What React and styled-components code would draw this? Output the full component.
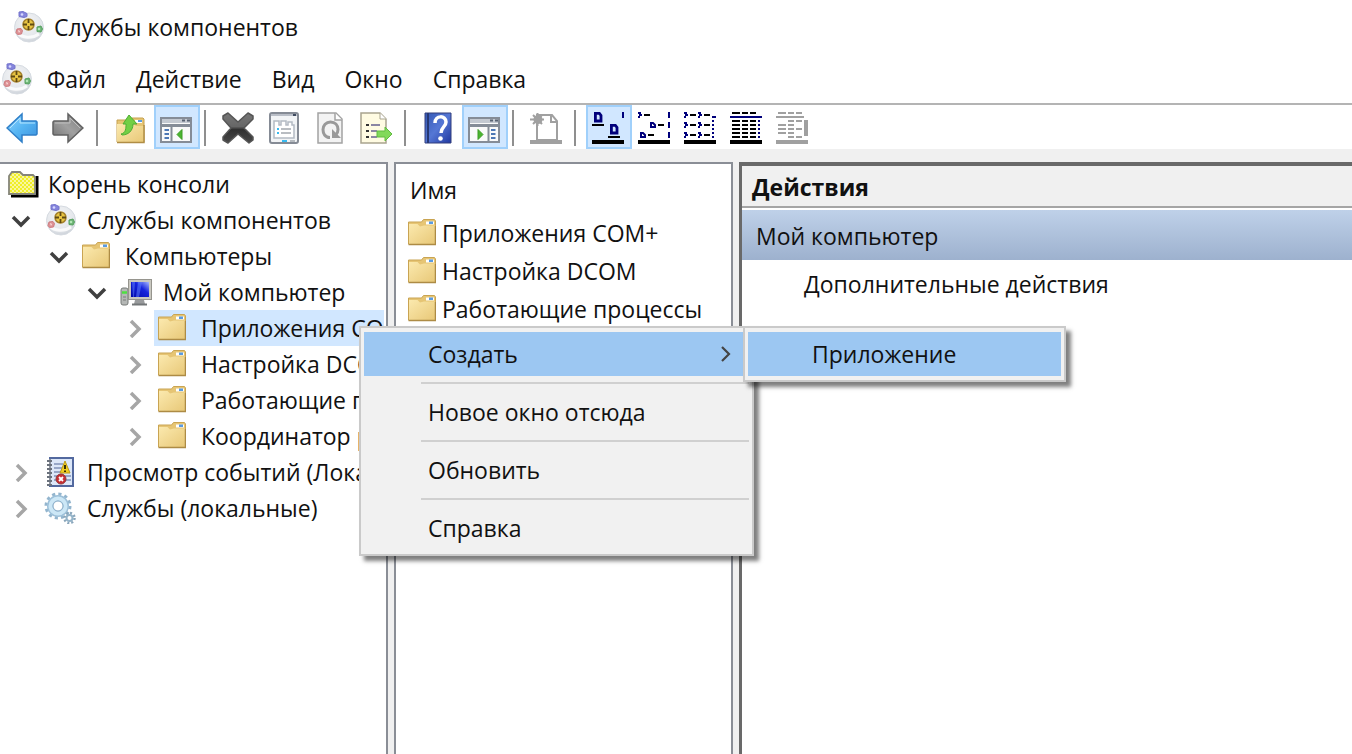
import React, { useState } from "react";
import styled, { createGlobalStyle, css } from "styled-components";

const GlobalStyle = createGlobalStyle`
  * {
    box-sizing: border-box;
  }

  body {
    margin: 0;
    background: #fff;
    color: #111;
    font-family: "Open Sans", "Noto Sans", sans-serif;
    font-size: 23px;
    line-height: 36px;
  }

  button {
    font: inherit;
    color: inherit;
    background: none;
    border: 0;
    padding: 0;
    margin: 0;
    text-align: left;
  }
`;

const Window = styled.div`
  display: flex;
  flex-direction: column;
  min-height: 100vh;
  overflow: hidden;
`;

const TitleBar = styled.header`
  display: flex;
  align-items: center;
  gap: 10px;
  height: 54px;
  padding: 0 12px;
`;

const Title = styled.h1`
  margin: 0;
  font-size: inherit;
  font-weight: 400;
`;

const MenuBar = styled.nav`
  display: flex;
  align-items: center;
  height: 51px;
  border-bottom: 2px solid #b4b4b4;
`;

const MenuBarItem = styled.button`
  padding: 0 15px;
`;

const ToolBar = styled.div`
  display: flex;
  height: 44px;
`;

const ToolButton = styled.button`
  display: flex;
  align-items: center;
  justify-content: center;
  width: 46px;
  flex: none;
  padding: 2px 2px 0 0;
  border: 2px solid transparent;

  ${(props) =>
    props.$pressed &&
    css`
      background: #d1e7ff;
      border-color: #a0d0fb;
    `}
`;

const ToolSeparator = styled.span`
  width: 2px;
  height: 36px;
  margin: 5px 10px 0 4px;
  background: #8f8f8f;
  flex: none;
`;

const Workspace = styled.main`
  position: relative;
  display: flex;
  flex: 1;
  gap: 6px;
  padding-top: 13px;
  background: #f0f0f0;
`;

const paneStyles = css`
  background: #fff;
  border: 2px solid #8a8e96;
  border-bottom: 0;
  overflow: hidden;
`;

const TreePane = styled.section`
  ${paneStyles}
  flex: 0 0 388px;
  border-left: 0;
  padding: 2px 2px 0 0;
`;

const TreeRow = styled.div`
  display: flex;
  align-items: center;
  height: 36px;
  padding-left: ${(props) => props.$level * 38}px;
  white-space: nowrap;
`;

const Expander = styled.button`
  display: flex;
  align-items: center;
  justify-content: center;
  flex: none;
  width: 40px;
  height: 36px;
  padding-left: 2px;
  color: ${(props) => (props.$open ? "#404040" : "#a6a6a6")};
`;

const TreeLabel = styled.button`
  display: flex;
  align-items: center;
  gap: ${(props) => (props.$root ? 9 : 11)}px;
  flex: 1;
  min-width: 0;
  height: 36px;
  overflow: hidden;
  padding-left: ${(props) => (props.$root ? 8 : 4)}px;
  background: ${(props) => (props.$selected ? "#d1e7ff" : "transparent")};

  svg {
    flex: none;
  }
`;

const IconSlot = styled.span`
  display: flex;
  align-items: center;
  flex: none;
  width: 32px;
`;

const ListPane = styled.section`
  ${paneStyles}
  flex: 0 0 339px;
  padding: 2px 0 0 12px;
`;

const List = styled.table`
  border-collapse: collapse;
  white-space: nowrap;

  th {
    height: 48px;
    padding: 0 2px;
    font-weight: 400;
    text-align: left;
  }

  td {
    height: 38px;
    padding: 0;
  }
`;

const ListCell = styled.div`
  display: flex;
  align-items: center;
  gap: 6px;
`;

const ActionsPane = styled.aside`
  flex: 1;
  min-width: 0;
  background: #fff;
  border-top: 4px solid #696969;
  border-left: 3px solid #696969;
`;

const ActionsHeader = styled.h2`
  margin: 0 0 2px;
  height: 42px;
  padding: 3px 10px 0;
  border-bottom: 2px solid #a5a5a5;
  background: #f0f0f0;
  font-size: inherit;
  font-weight: 700;
`;

const ActionsGroup = styled.h3`
  margin: 0;
  height: 50px;
  padding: 8px 14px;
  background: linear-gradient(#bfd1e9, #9db1ce);
  font-size: inherit;
  font-weight: 400;
`;

const ActionLink = styled.button`
  display: block;
  padding: 6px 62px;
  white-space: nowrap;
`;

const popupStyles = css`
  position: absolute;
  display: flex;
  flex-direction: column;
  padding: 4px 3px;
  background: #f1f1f1;
  border: 2px solid #cacaca;
  box-shadow: 5px 5px 4px rgba(0, 0, 0, 0.5);
`;

const ContextMenu = styled.div`
  ${popupStyles}
  left: 359px;
  top: 177px;
  width: 395px;
`;

const SubMenu = styled.div`
  ${popupStyles}
  left: 743px;
  top: 177px;
  width: 323px;
`;

const MenuItem = styled.button`
  display: flex;
  align-items: center;
  justify-content: space-between;
  height: 44px;
  padding: 0 16px 0 64px;
  background: ${(props) => (props.$active ? "#9cc7f2" : "transparent")};
`;

const MenuSeparator = styled.hr`
  width: calc(100% - 57px);
  margin: 6px 0 6px 57px;
  border: 0;
  border-top: 2px solid #d0d0d0;
`;

const Icon = ({ size = 32, box = 32, children, ...rest }) => (
  <svg width={size} height={size} viewBox={`0 0 ${box} ${box}`} fill="none" aria-hidden="true" {...rest}>
    {children}
  </svg>
);

const ComponentsIcon = () => (
  <Icon>
    <defs>
      <radialGradient id="ball" cx=".45" cy=".35" r=".7">
        <stop offset="0" stopColor="#f4f5f7" />
        <stop offset=".7" stopColor="#e4e7eb" />
        <stop offset="1" stopColor="#c6ccd4" />
      </radialGradient>
    </defs>
    <circle cx="17" cy="16.500" r="14.500" fill="url(#ball)" stroke="#d6dbe1" />
    <path d="M6 22c4 5 14 6 21 1" stroke="#fff" strokeWidth="3" opacity=".8" />
    <circle cx="16.500" cy="13.500" r="5.500" fill="#e9c542" stroke="#a5822c" strokeWidth="1.500" />
    <path d="M16.500 8v4M16.500 15v4M11 13.500h4M18 13.500h4" stroke="#5f4a14" strokeWidth="1.800" />
    <path d="M7 1l4-.5 4 2v3l-3 1-5-1z" fill="#8585dc" stroke="#7474cc" />
    <circle cx="10" cy="3.500" r="1.300" fill="#d8d8ff" />
    <path d="M5 18l4-.5 1.500 2-1 3.500-4 .5-1.500-2z" fill="#dd9295" stroke="#cf7c80" />
    <path d="M6 19l2 1-1 2z" fill="#ffe4e4" />
    <path d="M25 16l4-1 1.500 3-1.500 3-4-.5z" fill="#6cb475" stroke="#56a15f" />
    <circle cx="27" cy="18" r="1.300" fill="#b4e6b7" />
  </Icon>
);

const FolderFill = () => (
  <defs>
    <linearGradient id="folder" x1="0" y1="0" x2="1" y2="1">
      <stop offset="0" stopColor="#fbe9ae" />
      <stop offset="1" stopColor="#e8c878" />
    </linearGradient>
  </defs>
);

const FolderIcon = () => (
  <svg width="28" height="28" viewBox="0 0 28 28" fill="none" aria-hidden="true">
    <FolderFill />
    <path d="M.5 3h13l2-2.500h11l1 1.500V25H.5z" fill="#e6c574" stroke="#c9a452" />
    <path d="M18 2.500h8v3h-8z" fill="#fff" />
    <path d="M21 2.500h4v2.500h-4z" fill="#5a9be0" />
    <path d="M1 5h8.500l2.500 2.500 4-1H27V25H1z" fill="url(#folder)" />
    <path d="M.5 25.500h27V7" stroke="#ad8b45" strokeWidth="1.500" />
  </svg>
);

const RootIcon = () => (
  <svg width="31" height="28" viewBox="0 0 31 28" fill="none" aria-hidden="true">
    <defs>
      <pattern id="dots" width="4" height="4" patternUnits="userSpaceOnUse">
        <path d="M0 0h4v4H0z" fill="#f0ee28" />
        <path d="M0 0h2v2H0zM2 2h2v2H2z" fill="#f8f6a0" />
      </pattern>
    </defs>
    <path d="M3 26h26V6" stroke="#000" strokeWidth="3" />
    <path d="M1 24V6l3-4h8l3 3h10l2 2v17z" fill="url(#dots)" stroke="#85857a" strokeWidth="1.800" />
  </svg>
);

const ComputerIcon = () => (
  <Icon>
    <defs>
      <linearGradient id="screen" x1="0" y1="1" x2="1" y2="0">
        <stop offset="0" stopColor="#0008a8" />
        <stop offset=".6" stopColor="#1624dd" />
        <stop offset="1" stopColor="#a6b8ff" />
      </linearGradient>
    </defs>
    <rect x="1" y="12" width="7" height="17" rx="2" fill="#b5b8b6" stroke="#777b78" />
    <path d="M2 16.500h5" stroke="#4de03f" strokeWidth="2.500" />
    <path d="M3 21h3M3 24h3" stroke="#7b7b7b" />
    <path d="M15 24h9l1 4H14z" fill="#999b9d" />
    <path d="M12 28.500h15" stroke="#737678" strokeWidth="2" />
    <rect x="8.500" y="3.500" width="23" height="20" fill="#c9c8c0" stroke="#96958e" />
    <rect x="11" y="6" width="18" height="15" fill="url(#screen)" />
    <path d="M18 6h4l-3 15h-3zM12 6h3l-1 15h-1z" fill="#6585ff" opacity=".5" />
  </Icon>
);

const EventsIcon = () => (
  <Icon>
    <rect x="6" y="2" width="23" height="28" fill="#dce7f8" stroke="#53699f" strokeWidth="2" />
    <path d="M10 8h9M10 12h8M10 16h7M10 20h17M10 24h17" stroke="#8092b8" strokeWidth="1.500" />
    <path d="M6 3v26" stroke="#8e949f" strokeWidth="2" />
    <path d="M3 5h5M3 9h5M3 13h5M3 17h5M3 21h5M3 25h5M3 29h5" stroke="#6a717c" strokeWidth="1.800" />
    <path d="M21 5l5 12H16z" fill="#f2ce22" stroke="#bb9a18" />
    <path d="M21 9v4M21 14.500v1.500" stroke="#383000" strokeWidth="2" />
    <circle cx="17" cy="23" r="5" fill="#c72e32" stroke="#94383b" />
    <path d="M15 21l4 4M19 21l-4 4" stroke="#fff" strokeWidth="1.800" />
  </Icon>
);

const ServicesIcon = () => (
  <Icon>
    <circle cx="14" cy="14" r="12" stroke="#93b5ce" strokeWidth="3" strokeDasharray="3.140 3.140" />
    <circle cx="14" cy="14" r="8" stroke="#9dc0d9" strokeWidth="6" />
    <circle cx="14" cy="14" r="7.500" stroke="#cce7f6" strokeWidth="4" />
    <circle cx="14" cy="14" r="5" fill="#fff" stroke="#83a9c6" />
    <circle cx="25.500" cy="26" r="5" stroke="#8aa6bb" strokeWidth="2.500" strokeDasharray="1.960 1.960" />
    <circle cx="25.500" cy="26" r="3" fill="#fff" stroke="#95b4c9" strokeWidth="2" />
  </Icon>
);

const ArrowIcon = ({ forward }) => (
  <Icon>
    <defs>
      <linearGradient id={forward ? "fwd" : "back"} x1="0" y1="0" x2="1" y2="1">
        <stop offset="0" stopColor={forward ? "#7d7d7d" : "#8fd4ff"} />
        <stop offset=".5" stopColor={forward ? "#a0a0a0" : "#55b4f2"} />
        <stop offset="1" stopColor={forward ? "#6e6e6e" : "#3c90dc"} />
      </linearGradient>
    </defs>
    <path
      d="M1 16L16 2v7h14l1 1v12l-1 1H16v7z"
      transform={forward ? "matrix(-1 0 0 1 32 0)" : undefined}
      fill={`url(#${forward ? "fwd" : "back"})`}
      stroke={forward ? "#616161" : "#2f7fc8"}
      strokeWidth="1.500"
    />
    <path
      d="M4 16L14 6v5h15"
      transform={forward ? "matrix(-1 0 0 1 32 0)" : undefined}
      stroke={forward ? "#c0c0c0" : "#b5e5ff"}
    />
  </Icon>
);

const FolderUpIcon = () => (
  <Icon>
    <path d="M3 8h13l2-2h11l1 1v23H3z" fill="#e6c574" stroke="#c6a14f" />
    <path d="M21 8h7v3h-7z" fill="#fff" />
    <path d="M24 8h4v2h-4z" fill="#5a9be0" />
    <path d="M3 12h16l3 2h8v16H3z" fill="url(#folder)" />
    <path d="M3 30.500h27V13" stroke="#b08d45" strokeWidth="1.500" />
    <path d="M7 22c5-1 5-6 5-10H9l6-9 8 9h-4c0 7-5 11-11 11z" fill="#72cf45" stroke="#4fae34" />
  </Icon>
);

const PaneIcon = ({ flip }) => (
  <Icon>
    <path d="M1 6h30v24H1z" fill="#fafafa" stroke="#858c97" strokeWidth="2" />
    <path d="M2 7h28v4H2z" fill="#c4c9d1" />
    <path d="M22 8.500h3M27 8.500h3" stroke="#596372" strokeWidth="2" />
    <path d="M2 13.500h28" stroke="#858c97" strokeWidth="3" />
    <g transform={flip ? "matrix(-1 0 0 1 32 0)" : undefined}>
      <path d="M11.500 15v14" stroke="#858c97" strokeWidth="2" />
      <path d="M4.500 18H9M4.500 22H9M4.500 26H9" stroke="#4e78b5" strokeWidth="2" />
      <path d="M17 22.500l5-5v10z" fill="#4bb52f" stroke="#3c9b24" />
    </g>
  </Icon>
);

const DeleteIcon = () => (
  <Icon>
    <defs>
      <linearGradient id="cross" x1="0" y1="0" x2="0" y2="1">
        <stop offset="0" stopColor="#777" />
        <stop offset=".45" stopColor="#666" />
        <stop offset=".55" stopColor="#303030" />
        <stop offset="1" stopColor="#484848" />
      </linearGradient>
    </defs>
    <path
      d="M1 4l5-3 10 9 10-9 5 3v3l-9 9 9 9v3l-4 3-11-9-10 9-5-3v-3l8-9-8-9z"
      fill="url(#cross)"
      stroke="#555"
      strokeWidth="1.500"
      strokeLinejoin="round"
    />
  </Icon>
);

const PropertiesIcon = () => (
  <Icon>
    <rect x="2" y="1" width="28" height="30" rx="2" fill="#f2f4f6" stroke="#858b95" strokeWidth="2" />
    <path d="M3 3h26" stroke="#b9bec7" strokeWidth="2" />
    <path d="M25 3h3" stroke="#3f4b60" strokeWidth="2" />
    <path d="M6 26V9h5v4h2V9h5v4h2v-3h4v3h2v13z" fill="#fff" stroke="#b4bac4" strokeWidth="1.500" />
    <path d="M9 17h2M9 21h2M14 29h5" stroke="#38b9ef" strokeWidth="2" />
    <path d="M13 17h10M13 21h10M22 29h5" stroke="#a3a8af" strokeWidth="1.500" />
  </Icon>
);

const RefreshIcon = () => (
  <Icon>
    <path d="M4 1h18l6 6v24H4z" fill="#f3f3f3" stroke="#a3a3a3" strokeWidth="1.500" />
    <path d="M21 1v7h7" stroke="#a3a3a3" strokeWidth="1.500" fill="#fff" />
    <path d="M16 25.500c-5 0-7-4-7-8s3-7.500 7.500-7.500 7.500 3 7.500 7.500c0 2-1 4-2 5" stroke="#999" strokeWidth="3" />
    <path d="M18 17v9h9z" fill="#999" />
  </Icon>
);

const ExportIcon = () => (
  <Icon>
    <path d="M1 1h19l6 6v24H1z" fill="#fffbe2" stroke="#a9a48f" strokeWidth="1.500" />
    <path d="M20 1v6h6" stroke="#a9a48f" fill="#fff" />
    <path d="M6 13h3M6 19h3M6 25h3" stroke="#333" strokeWidth="2" />
    <path d="M11 13h9M11 19h6M11 25h6" stroke="#8b86a3" strokeWidth="2" />
    <path d="M17 19h8v-4l7 7-7 7v-4h-8z" fill="#82d95a" stroke="#61bb40" />
  </Icon>
);

const HelpIcon = () => (
  <Icon>
    <defs>
      <linearGradient id="book" x1="0" y1="0" x2="1" y2="1">
        <stop offset="0" stopColor="#3458b4" />
        <stop offset=".5" stopColor="#5577d5" />
        <stop offset="1" stopColor="#2038a0" />
      </linearGradient>
    </defs>
    <path d="M3 1h26v30H3z" fill="url(#book)" stroke="#333f7c" />
    <path d="M6 1v30" stroke="#263875" strokeWidth="2" />
    <path d="M13 11c0-8 11-8 11-1 0 5-5 5-5 11" stroke="#fff" strokeWidth="3.500" />
    <circle cx="18.500" cy="26.500" r="2.300" fill="#fff" />
  </Icon>
);

const NewIcon = () => (
  <Icon>
    <path d="M7 3h15l5 6v19H7z" fill="#fff" stroke="#a0a0a0" strokeWidth="2" />
    <path d="M21 3v7h6" stroke="#a0a0a0" strokeWidth="2" />
    <path d="M0 30h32" stroke="#a0a0a0" strokeWidth="4" />
    <path d="M7.500 1v13M0 7.500h14M3 3l9 9M12 3l-9 9" stroke="#a0a0a0" strokeWidth="2" />
    <circle cx="8" cy="7.500" r="4.500" fill="#a0a0a0" />
  </Icon>
);

const navy = "#00007b";

const LargeViewIcon = () => (
  <Icon box={16}>
    <path d="M1.700.700h2l.8 1v2.800H1.700zM9.700 6.700h2l.8 1v2.800H9.700z" stroke={navy} strokeWidth="1.400" />
    <path d="M15.500 0v3" stroke={navy} />
    <path d="M0 6.500h6M8 12.500h6" stroke="#000" />
    <path d="M0 15h16" stroke="#000" strokeWidth="2" />
  </Icon>
);

const SmallViewIcon = () => (
  <Icon box={16}>
    <path d="M0 .5h1v1h1M1 2.500H0M6.500 5.500h1l1 1v1h-2zM1.500 10.500h1l1 1v1h-2z" stroke={navy} />
    <path d="M15.500 0v3m0 2v3m0 2v3" stroke={navy} />
    <path d="M3 1.500h3M10 6.500h3M5 11.500h3" stroke="#000" />
    <path d="M0 15h16" stroke="#000" strokeWidth="2" />
  </Icon>
);

const ListViewIcon = () => (
  <Icon box={16}>
    {[0, 5, 10].map((y) => (
      <g key={y} transform={`translate(0 ${y})`}>
        <path d="M0 .5h1v1h1M1 2.500H0M7 .5h1v1h1M8 2.500H7" stroke={navy} />
        <path d="M3 1.500h3M10 1.500h3" stroke="#000" />
      </g>
    ))}
    <path d="M14 2.500h2" stroke={navy} />
    <path d="M14.500 4v9" stroke={navy} strokeDasharray="1 1" />
    <path d="M0 15h16" stroke="#000" strokeWidth="2" />
  </Icon>
);

const DetailViewIcon = () => (
  <Icon box={16}>
    <path d="M1 .5h12" stroke="#000" strokeDasharray="4 1 3 1 3 1" />
    <path d="M0 2.500h16" stroke={navy} />
    <path d="M1 4.500h12M1 6.500h12M1 8.500h12M1 10.500h12M1 12.500h12" stroke="#000" strokeDasharray="4 1 3 1 3 1" />
    <path d="M14.500 4v9" stroke={navy} strokeDasharray="1 1" />
    <path d="M0 15h16" stroke="#000" strokeWidth="2" />
  </Icon>
);

const FilterViewIcon = () => (
  <Icon box={16}>
    <path d="M1 .5h12" stroke="#a0a0a0" strokeDasharray="4 1 3 1 3 1" />
    <path d="M0 2.500h14" stroke="#a0a0a0" />
    <path
      d="M6 4.500h3M10 4.500h3M1 6.500h4M6 6.500h3M1 8.500h4M6 8.500h3M10 8.500h3M1 10.500h4M6 10.500h3M6 12.500h3M10 12.500h3"
      stroke="#a0a0a0"
    />
    <path d="M15 4v8" stroke="#a0a0a0" strokeWidth="2" />
    <path d="M0 15h16" stroke="#a0a0a0" strokeWidth="2" />
  </Icon>
);

const Chevron = ({ open }) => (
  <Icon size={20} box={20}>
    <path d={open ? "M2 7l8 8 8-8" : "M6 3l8 8-8 8"} stroke="currentColor" strokeWidth="3.500" />
  </Icon>
);

const tools = [
  { label: "Назад", icon: <ArrowIcon /> },
  { label: "Вперед", icon: <ArrowIcon forward /> },
  null,
  { label: "Вверх", icon: <FolderUpIcon /> },
  { label: "Дерево консоли", icon: <PaneIcon />, pressed: true },
  null,
  { label: "Удалить", icon: <DeleteIcon /> },
  { label: "Свойства", icon: <PropertiesIcon /> },
  { label: "Обновить", icon: <RefreshIcon /> },
  { label: "Экспортировать список", icon: <ExportIcon /> },
  null,
  { label: "Справка", icon: <HelpIcon /> },
  { label: "Панель действий", icon: <PaneIcon flip />, pressed: true },
  null,
  { label: "Создать", icon: <NewIcon /> },
  null,
  { label: "Крупные значки", icon: <LargeViewIcon />, pressed: true },
  { label: "Мелкие значки", icon: <SmallViewIcon /> },
  { label: "Список", icon: <ListViewIcon /> },
  { label: "Таблица", icon: <DetailViewIcon /> },
  { label: "Состояние", icon: <FilterViewIcon /> },
];

const tree = [
  { level: 0, text: "Корень консоли", icon: <RootIcon />, root: true },
  { level: 0, text: "Службы компонентов", icon: <ComponentsIcon />, open: true },
  { level: 1, text: "Компьютеры", icon: <FolderIcon />, open: true },
  { level: 2, text: "Мой компьютер", icon: <ComputerIcon />, open: true },
  { level: 3, text: "Приложения COM+", icon: <FolderIcon /> },
  { level: 3, text: "Настройка DCOM", icon: <FolderIcon /> },
  { level: 3, text: "Работающие процессы", icon: <FolderIcon /> },
  { level: 3, text: "Координатор распределенных транзакций", icon: <FolderIcon /> },
  { level: 0, text: "Просмотр событий (Локальный)", icon: <EventsIcon /> },
  { level: 0, text: "Службы (локальные)", icon: <ServicesIcon /> },
];

const menus = ["Файл", "Действие", "Вид", "Окно", "Справка"];
const objects = ["Приложения COM+", "Настройка DCOM", "Работающие процессы"];

function App() {
  const [selected, setSelected] = useState("Приложения COM+");

  return (
    <>
      <GlobalStyle />
      <Window>
        <TitleBar>
          <ComponentsIcon />
          <Title>Службы компонентов</Title>
        </TitleBar>
        <MenuBar>
          <ComponentsIcon />
          {menus.map((name) => (
            <MenuBarItem key={name}>{name}</MenuBarItem>
          ))}
        </MenuBar>
        <ToolBar>
          {tools.map((tool, i) =>
            tool ? (
              <ToolButton key={i} aria-label={tool.label} $pressed={tool.pressed}>
                {tool.icon}
              </ToolButton>
            ) : (
              <ToolSeparator key={i} />
            )
          )}
        </ToolBar>
        <Workspace>
          <TreePane>
            {tree.map((node) => (
              <TreeRow key={node.text} $level={node.level}>
                {!node.root && (
                  <Expander $open={node.open} aria-label={node.text} aria-expanded={!!node.open}>
                    <Chevron open={node.open} />
                  </Expander>
                )}
                <TreeLabel
                  $root={node.root}
                  $selected={selected === node.text}
                  onClick={() => setSelected(node.text)}
                >
                  {node.root ? node.icon : <IconSlot>{node.icon}</IconSlot>}
                  {node.text}
                </TreeLabel>
              </TreeRow>
            ))}
          </TreePane>
          <ListPane>
            <List>
              <thead>
                <tr>
                  <th>Имя</th>
                </tr>
              </thead>
              <tbody>
                {objects.map((name) => (
                  <tr key={name}>
                    <td>
                      <ListCell>
                        <FolderIcon />
                        {name}
                      </ListCell>
                    </td>
                  </tr>
                ))}
              </tbody>
            </List>
          </ListPane>
          <ActionsPane>
            <ActionsHeader>Действия</ActionsHeader>
            <ActionsGroup>Мой компьютер</ActionsGroup>
            <ActionLink>Дополнительные действия</ActionLink>
          </ActionsPane>
          <ContextMenu>
            <MenuItem $active>
              Создать
              <Icon size={16} box={16}>
                <path d="M5 1l7 7-7 7" stroke="#444" strokeWidth="2.200" />
              </Icon>
            </MenuItem>
            <MenuSeparator />
            <MenuItem>Новое окно отсюда</MenuItem>
            <MenuSeparator />
            <MenuItem>Обновить</MenuItem>
            <MenuSeparator />
            <MenuItem>Справка</MenuItem>
          </ContextMenu>
          <SubMenu>
            <MenuItem $active>Приложение</MenuItem>
          </SubMenu>
        </Workspace>
      </Window>
    </>
  );
}

export default App;
